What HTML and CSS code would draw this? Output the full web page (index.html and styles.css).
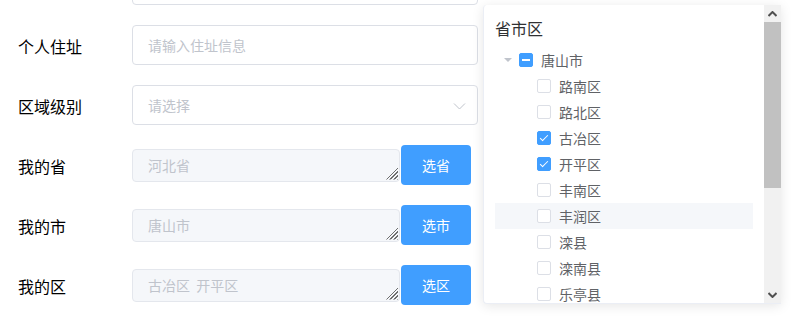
FILE: index.html
```html
<!DOCTYPE html>
<html lang="zh-CN">
<head>
  <meta charset="UTF-8">
  <title>地址选择</title>
  <link rel="stylesheet" href="styles.css">
</head>
<body>
  <div class="form">
    <!-- row scrolled out of view, only its input edge shows -->
    <div class="form-row">
      <span class="form-label"></span>
      <input type="text" class="text-input">
    </div>

    <div class="form-row">
      <label class="form-label">个人住址</label>
      <input type="text" class="text-input" placeholder="请输入住址信息">
    </div>

    <div class="form-row">
      <label class="form-label">区域级别</label>
      <div class="select-box">
        <span class="placeholder">请选择</span>
        <svg class="chevron" width="13" height="13" viewBox="0 0 13 13">
          <path d="M1 4.5 L6.5 10 L12 4.5" fill="none" stroke="#c0c4cc" stroke-width="1"/>
        </svg>
      </div>
    </div>

    <div class="form-row">
      <label class="form-label">我的省</label>
      <span class="area-wrap"><textarea class="area" readonly>河北省</textarea></span>
      <button class="pick-button">选省</button>
    </div>

    <div class="form-row">
      <label class="form-label">我的市</label>
      <span class="area-wrap"><textarea class="area" readonly>唐山市</textarea></span>
      <button class="pick-button">选市</button>
    </div>

    <div class="form-row">
      <label class="form-label">我的区</label>
      <span class="area-wrap"><textarea class="area" readonly>古冶区  开平区</textarea></span>
      <button class="pick-button">选区</button>
    </div>
  </div>

  <div class="tree-pop">
    <div class="tree-body">
      <div class="tree-title">省市区</div>
      <ul class="tree">
        <li class="node">
          <span class="caret"></span>
          <span class="cb half"></span>
          <span class="node-text">唐山市</span>
        </li>
        <li class="node child"><span class="cb"></span><span class="node-text">路南区</span></li>
        <li class="node child"><span class="cb"></span><span class="node-text">路北区</span></li>
        <li class="node child"><span class="cb on"></span><span class="node-text">古冶区</span></li>
        <li class="node child"><span class="cb on"></span><span class="node-text">开平区</span></li>
        <li class="node child"><span class="cb"></span><span class="node-text">丰南区</span></li>
        <li class="node child hover"><span class="cb"></span><span class="node-text">丰润区</span></li>
        <li class="node child"><span class="cb"></span><span class="node-text">滦县</span></li>
        <li class="node child"><span class="cb"></span><span class="node-text">滦南县</span></li>
        <li class="node child"><span class="cb"></span><span class="node-text">乐亭县</span></li>
      </ul>
    </div>
    <div class="fake-scroll">
      <div class="scroll-btn">
        <svg width="9" height="6" viewBox="0 0 9 6"><path d="M0.5 5 L4.5 1 L8.5 5" fill="none" stroke="#505050" stroke-width="2"/></svg>
      </div>
      <div class="scroll-thumb"></div>
      <div class="scroll-track"></div>
      <div class="scroll-btn">
        <svg width="9" height="6" viewBox="0 0 9 6"><path d="M0.5 1 L4.5 5 L8.5 1" fill="none" stroke="#505050" stroke-width="2"/></svg>
      </div>
    </div>
  </div>
</body>
</html>
```

FILE: styles.css
```css
body {
  font-family: "Noto Sans CJK SC", "Noto Sans", sans-serif;
  margin: 0;
  background-color: #fff;
  color: #000;
  height: 324px;
  overflow: hidden;
}

.form {
  margin-top: -35px;
  padding-left: 18px;
}

.form-row {
  display: flex;
  align-items: center;
  height: 40px;
  margin-bottom: 20px;
}

.form-label {
  width: 114px;
  font-size: 16px;
  line-height: 20px;
  color: #000;
  margin-top: 2px;
}

.text-input,
.select-box {
  width: 346px;
  height: 40px;
  box-sizing: border-box;
  border: 1px solid #dcdfe6;
  border-radius: 4px;
  padding: 0 15px;
  font-family: inherit;
  font-size: 14px;
  color: #606266;
  outline: none;
}

.text-input::placeholder {
  color: #c0c4cc;
}

.select-box {
  display: flex;
  align-items: center;
  justify-content: space-between;
  padding-right: 11px;
}

.placeholder {
  color: #c0c4cc;
}

.chevron {
  margin-top: 1px;
}

.area-wrap {
  position: relative;
  display: block;
  width: 268px;
  height: 33px;
}

.area-wrap::after {
  content: "";
  position: absolute;
  right: 2px;
  bottom: 2px;
  width: 13px;
  height: 13px;
  background: repeating-linear-gradient(135deg, transparent 0 1.5px, #6e6e6e 1.5px 2.6px);
  clip-path: polygon(100% 0, 100% 100%, 0 100%);
}

.area {
  display: block;
  width: 100%;
  height: 100%;
  box-sizing: border-box;
  margin: 0;
  padding: 5px 15px;
  border: 1px solid #e4e7ed;
  border-radius: 4px;
  background-color: #f5f7fa;
  color: #c0c4cc;
  font-family: inherit;
  font-size: 14px;
  line-height: 21px;
  resize: none;
  overflow: hidden;
  outline: none;
  white-space: pre;
}

.pick-button {
  width: 70px;
  height: 40px;
  margin-left: 1px;
  background-color: #409eff;
  color: #fff;
  border: none;
  border-radius: 4px;
  font-family: inherit;
  font-size: 14px;
  padding: 0;
  cursor: pointer;
}

/* dropdown tree panel */
.tree-pop {
  position: absolute;
  left: 483px;
  top: 5px;
  width: 298px;
  height: 299px;
  box-sizing: border-box;
  display: flex;
  background-color: #fff;
  border: 1px solid #ebeef5;
  border-right: none;
  border-top: none;
  border-radius: 4px 0 0 4px;
  box-shadow: 0 2px 12px 0 rgba(0, 0, 0, 0.1);
  overflow: hidden;
}

.tree-body {
  flex: 1;
  padding: 11px 11px 0 11px;
  overflow: hidden;
}

.tree-title {
  font-size: 16px;
  line-height: 24px;
  color: #303133;
  margin-bottom: 7px;
}

.tree {
  list-style: none;
  margin: 0;
  padding: 0;
}

.node {
  display: flex;
  align-items: center;
  height: 26px;
  font-size: 14px;
  color: #606266;
}

.node.child {
  padding-left: 42px;
}

.node.hover {
  background-color: #f5f7fa;
}

.caret {
  width: 24px;
  display: flex;
  justify-content: center;
}

.caret::before {
  content: "";
  border-left: 4px solid transparent;
  border-right: 4px solid transparent;
  border-top: 4px solid #c0c4cc;
  margin-left: 1px;
}

.cb {
  position: relative;
  width: 14px;
  height: 14px;
  box-sizing: border-box;
  border: 1px solid #dcdfe6;
  border-radius: 2px;
  background-color: #fff;
  margin-right: 8px;
  display: flex;
  align-items: center;
  justify-content: center;
}

.cb.on,
.cb.half {
  background-color: #409eff;
  border-color: #409eff;
}

.cb.half::before {
  content: "";
  width: 8px;
  height: 2px;
  background-color: #fff;
}

.cb.on::after {
  content: "";
  position: absolute;
  left: 4px;
  top: 1px;
  width: 3px;
  height: 7px;
  border: 1px solid #fff;
  border-left: 0;
  border-top: 0;
  transform: rotate(45deg);
}

.node-text {
  line-height: 26px;
}

.fake-scroll {
  width: 17px;
  display: flex;
  flex-direction: column;
  background-color: #f1f1f1;
}

.scroll-btn {
  height: 17px;
  display: flex;
  align-items: center;
  justify-content: center;
}

.scroll-thumb {
  height: 166px;
  background-color: #c1c1c1;
}

.scroll-track {
  flex: 1;
}
```
